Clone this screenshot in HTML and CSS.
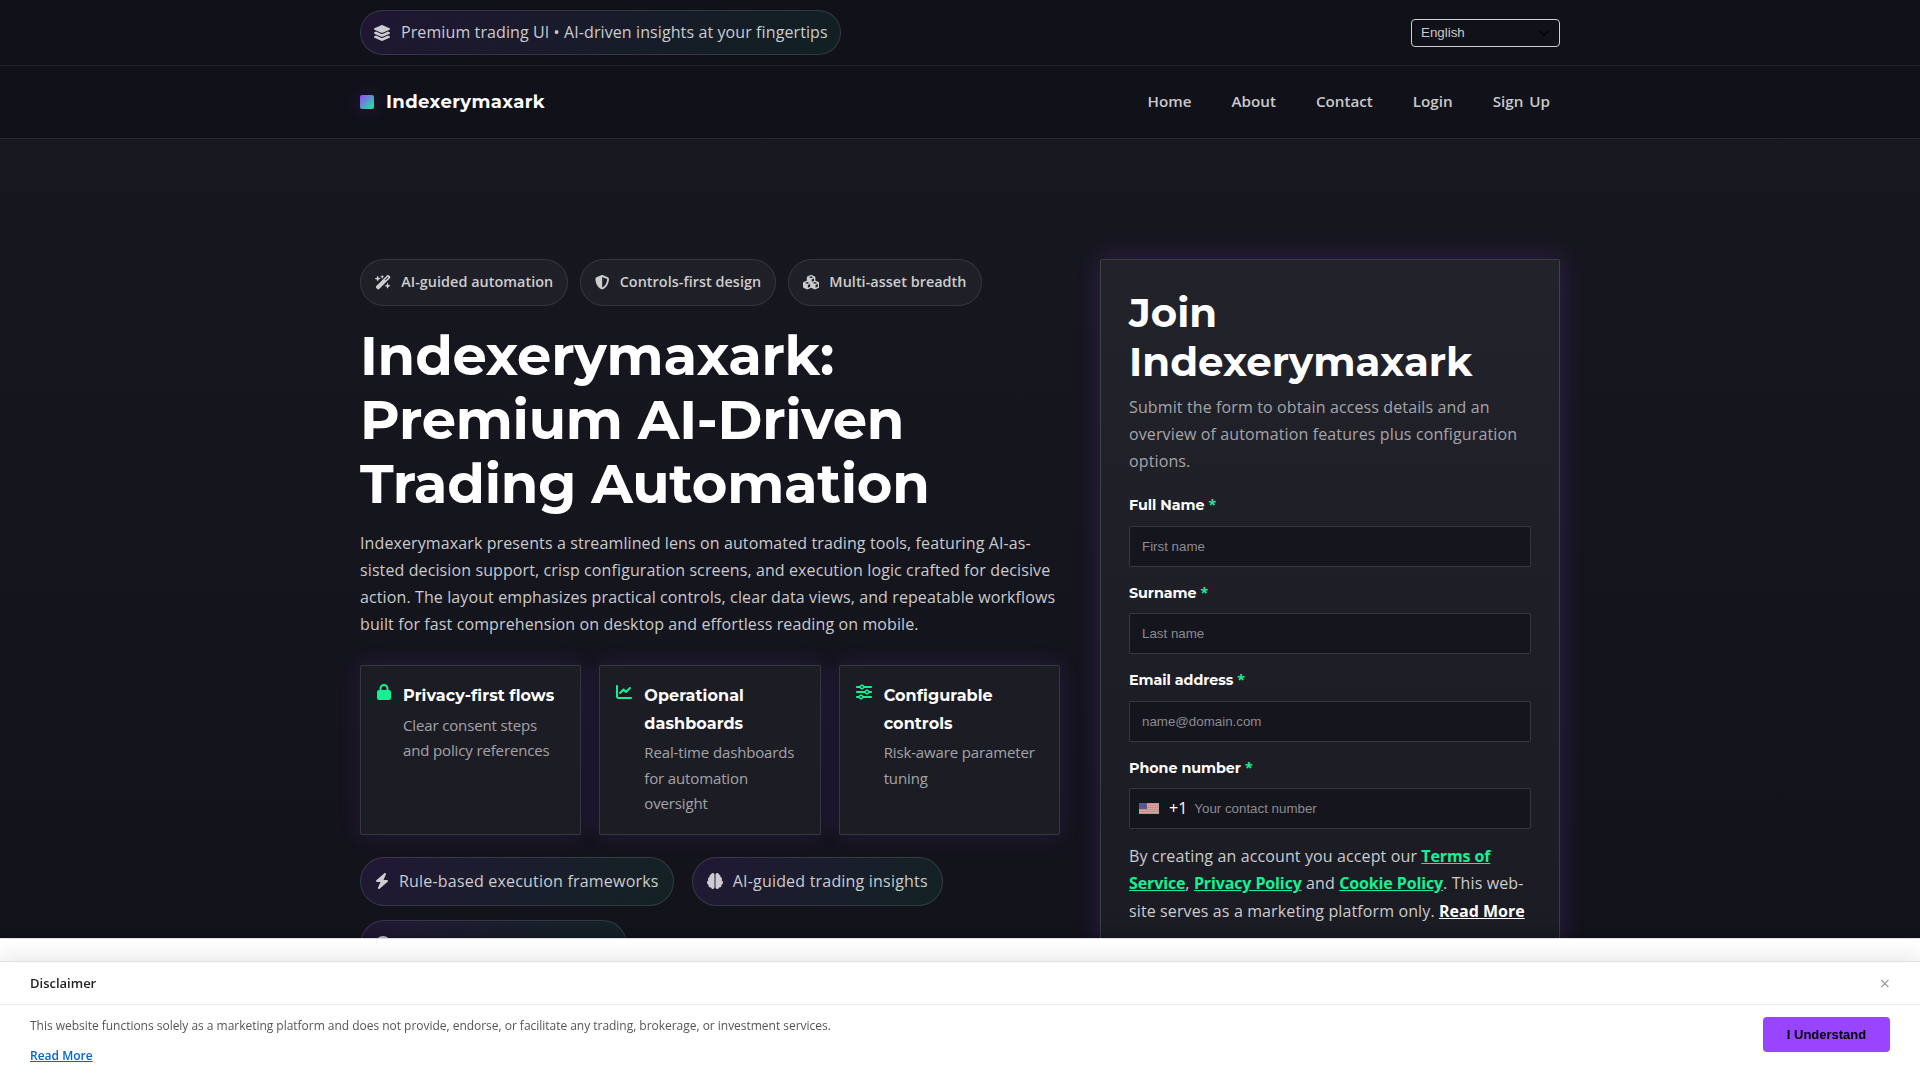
FILE: index.html
```html
<!DOCTYPE html>
<html lang="en">
<head>
    <meta charset="UTF-8">
    <meta name="viewport" content="width=device-width, initial-scale=1.0">
    <title>Indexerymaxark</title>
    <link rel="stylesheet" href="styles.css">
</head>
<body>
    <div class="topbar">
        <div class="container topbar-inner">
            <div class="pill pill-top">
                <svg class="icon icon-18" viewBox="0 0 576 512"><path d="M264.5 5.2c14.9-6.9 32.1-6.9 47 0l218.6 101c8.5 3.9 13.9 12.4 13.9 21.8s-5.4 17.9-13.9 21.8l-218.6 101c-14.9 6.9-32.1 6.9-47 0L45.9 149.8C37.4 145.8 32 137.3 32 128s5.4-17.9 13.9-21.8L264.5 5.2zM476.9 209.6l53.2 24.6c8.5 3.9 13.9 12.4 13.9 21.8s-5.4 17.9-13.9 21.8l-218.6 101c-14.9 6.9-32.1 6.9-47 0L45.9 277.8C37.4 273.8 32 265.3 32 256s5.4-17.9 13.9-21.8l53.2-24.6 152 70.2c23.4 10.8 50.4 10.8 73.8 0l152-70.2zm-152 198.2l152-70.2 53.2 24.6c8.5 3.9 13.9 12.4 13.9 21.8s-5.4 17.9-13.9 21.8l-218.6 101c-14.9 6.9-32.1 6.9-47 0L45.9 405.8C37.4 401.8 32 393.3 32 384s5.4-17.9 13.9-21.8l53.2-24.6 152 70.2c23.4 10.8 50.4 10.8 73.8 0z"/></svg>
                <span>Premium trading UI • AI-driven insights at your fingertips</span>
            </div>
            <div class="lang">
                <span>English</span>
                <svg class="lang-arrow" viewBox="0 0 10 6"><path d="M1 1l4 4 4-4"/></svg>
            </div>
        </div>
    </div>
    <header>
        <div class="container header-inner">
            <a class="brand" href="#"><span class="brand-mark"></span><span class="brand-name">Indexerymaxark</span></a>
            <nav>
                <a href="#">Home</a>
                <a href="#">About</a>
                <a href="#">Contact</a>
                <a href="#">Login</a>
                <a href="#">Sign Up</a>
            </nav>
        </div>
    </header>
    <main class="hero">
        <div class="container hero-grid">
            <div class="hero-left">
                <div class="chips">
                    <div class="chip">
                        <svg class="icon chip-icon" viewBox="0 0 576 512"><path d="M234.7 42.7L197 56.8c-3 1.1-5 4-5 7.2s2 6.1 5 7.2l37.7 14.1L248.8 123c1.1 3 4 5 7.2 5s6.1-2 7.2-5l14.1-37.7L315 71.2c3-1.1 5-4 5-7.2s-2-6.1-5-7.2L277.3 42.7 263.2 5c-1.1-3-4-5-7.2-5s-6.1 2-7.2 5L234.7 42.7zM46.1 395.4c-18.7 18.7-18.7 49.1 0 67.9l34.6 34.6c18.7 18.7 49.1 18.7 67.9 0L529.9 116.5c18.7-18.7 18.7-49.1 0-67.9L495.3 14.1c-18.7-18.7-49.1-18.7-67.9 0L46.1 395.4zM484.6 82.6l-105 105-23.3-23.3 105-105 23.3 23.3zM7.5 117.2C3 118.9 0 123.2 0 128s3 9.1 7.5 10.8L64 160l21.2 56.5c1.7 4.5 6 7.5 10.8 7.5s9.1-3 10.8-7.5L128 160l56.5-21.2c4.5-1.7 7.5-6 7.5-10.8s-3-9.1-7.5-10.8L128 96 106.8 39.5C105.1 35 100.8 32 96 32s-9.1 3-10.8 7.5L64 96 7.5 117.2zm352 256c-4.5 1.7-7.5 6-7.5 10.8s3 9.1 7.5 10.8L416 416l21.2 56.5c1.7 4.5 6 7.5 10.8 7.5s9.1-3 10.8-7.5L480 416l56.5-21.2c4.5-1.7 7.5-6 7.5-10.8s-3-9.1-7.5-10.8L480 352l-21.2-56.5c-1.7-4.5-6-7.5-10.8-7.5s-9.1 3-10.8 7.5L416 352l-56.5 21.2z"/></svg>
                        <span>AI-guided automation</span>
                    </div>
                    <div class="chip">
                        <svg class="icon chip-icon" viewBox="0 0 512 512"><path d="M256 0c4.6 0 9.2 1 13.4 2.9L457.7 82.8c22 9.3 38.4 31 38.3 57.2c-.5 99.2-41.3 280.7-213.6 363.2c-16.7 8-36.1 8-52.8 0C57.3 420.7 16.5 239.2 16 140c-.1-26.2 16.3-47.9 38.3-57.2L242.7 2.9C246.8 1 251.4 0 256 0zm0 66.8V444.8C394 378 431.1 230.1 432 141.4L256 66.8z"/></svg>
                        <span>Controls-first design</span>
                    </div>
                    <div class="chip">
                        <svg class="icon chip-icon" viewBox="0 0 576 512"><path d="M290.8 48.6l78.4 29.7L288 109.5 206.8 78.3l78.4-29.7c1.8-.7 3.8-.7 5.7 0zM136 92.5V204.7c-1.3 .4-2.6 .8-3.9 1.3l-96 36.4C14.4 250.6 0 271.5 0 294.7V413.9c0 22.2 13.1 42.3 33.5 51.3l96 42.2c14.4 6.3 30.7 6.3 45.1 0L288 457.5l113.5 49.9c14.4 6.3 30.7 6.3 45.1 0l96-42.2c20.3-8.9 33.5-29.1 33.5-51.3V294.7c0-23.3-14.4-44.1-36.1-52.4l-96-36.4c-1.3-.5-2.6-.9-3.9-1.3V92.5c0-23.3-14.4-44.1-36.1-52.4l-96-36.4c-12.8-4.8-26.9-4.8-39.7 0l-96 36.4C150.4 48.4 136 69.3 136 92.5zM392 210.6l-82.4 31.2V152.6L392 121v89.6zM154.8 250.9l78.4 29.7L152 311.7 70.8 280.6l78.4-29.7c1.8-.7 3.8-.7 5.7 0zm18.8 204.4V354.8L256 323.2v95.9l-82.4 36.2zM421.2 250.9c1.8-.7 3.8-.7 5.7 0l78.4 29.7L424 311.7l-81.2-31.1 78.4-29.7zM523.2 421.2l-77.6 34.1V354.8L528 323.2v90.7c0 3.2-1.9 6-4.8 7.3z"/></svg>
                        <span>Multi-asset breadth</span>
                    </div>
                </div>
                <h1>Indexerymaxark: Premium AI-Driven Trading Automation</h1>
                <p class="lead">Indexerymaxark presents a streamlined lens on automated trading tools, featuring AI-as&shy;sisted decision support, crisp configuration screens, and execution logic crafted for decisive action. The layout emphasizes practical controls, clear data views, and repeatable workflows built for fast comprehension on desktop and effortless reading on mobile.</p>
                <div class="cards">
                    <div class="card">
                        <svg class="icon icon-14" viewBox="0 0 448 512"><path d="M144 144v48H304V144c0-44.2-35.8-80-80-80s-80 35.8-80 80zM80 192V144C80 64.5 144.5 0 224 0s144 64.5 144 144v48h16c35.3 0 64 28.7 64 64V448c0 35.3-28.7 64-64 64H64c-35.3 0-64-28.7-64-64V256c0-35.3 28.7-64 64-64H80z"/></svg>
                        <div>
                            <div class="card-title">Privacy-first flows</div>
                            <div class="card-text">Clear consent steps and policy references</div>
                        </div>
                    </div>
                    <div class="card">
                        <svg class="icon icon-16" viewBox="0 0 512 512"><path d="M64 64c0-17.7-14.3-32-32-32S0 46.3 0 64V400c0 44.2 35.8 80 80 80H480c17.7 0 32-14.3 32-32s-14.3-32-32-32H80c-8.8 0-16-7.2-16-16V64zm406.6 86.6c12.5-12.5 12.5-32.8 0-45.3s-32.8-12.5-45.3 0L320 210.7l-57.4-57.4c-12.5-12.5-32.8-12.5-45.3 0l-112 112c-12.5 12.5-12.5 32.8 0 45.3s32.8 12.5 45.3 0L240 221.3l57.4 57.4c12.5 12.5 32.8 12.5 45.3 0l128-128z"/></svg>
                        <div>
                            <div class="card-title">Operational dashboards</div>
                            <div class="card-text">Real-time dashboards for automation oversight</div>
                        </div>
                    </div>
                    <div class="card">
                        <svg class="icon icon-16" viewBox="0 0 512 512"><path d="M0 416c0 17.7 14.3 32 32 32l54.7 0c12.3 28.3 40.5 48 73.3 48s61-19.7 73.3-48L480 448c17.7 0 32-14.3 32-32s-14.3-32-32-32l-246.7 0c-12.3-28.3-40.5-48-73.3-48s-61 19.7-73.3 48L32 384c-17.7 0-32 14.3-32 32zm128 0a32 32 0 1 1 64 0 32 32 0 1 1 -64 0zM320 256a32 32 0 1 1 64 0 32 32 0 1 1 -64 0zm32-80c-32.8 0-61 19.7-73.3 48L32 224c-17.7 0-32 14.3-32 32s14.3 32 32 32l246.7 0c12.3 28.3 40.5 48 73.3 48s61-19.7 73.3-48l54.7 0c17.7 0 32-14.3 32-32s-14.3-32-32-32l-54.7 0c-12.3-28.3-40.5-48-73.3-48zM192 128a32 32 0 1 1 0-64 32 32 0 1 1 0 64zm73.3-64C253 35.7 224.8 16 192 16s-61 19.7-73.3 48L32 64C14.3 64 0 78.3 0 96s14.3 32 32 32l86.7 0c12.3 28.3 40.5 48 73.3 48s61-19.7 73.3-48L480 128c17.7 0 32-14.3 32-32s-14.3-32-32-32L265.3 64z"/></svg>
                        <div>
                            <div class="card-title">Configurable controls</div>
                            <div class="card-text">Risk-aware parameter tuning</div>
                        </div>
                    </div>
                </div>
                <div class="pills">
                    <div class="pill">
                        <svg class="icon icon-14" viewBox="0 0 448 512"><path d="M349.4 44.6c5.9-13.7 1.5-29.7-10.6-38.5s-28.6-8-39.9 1.8l-256 224c-10 8.8-13.6 22.9-8.9 35.3S50.7 288 64 288H175.5L98.6 467.4c-5.9 13.7-1.5 29.7 10.6 38.5s28.6 8 39.9-1.8l256-224c10-8.8 13.6-22.9 8.9-35.3s-16.6-20.7-30-20.7H272.5L349.4 44.6z"/></svg>
                        <span>Rule-based execution frameworks</span>
                    </div>
                    <div class="pill">
                        <svg class="icon icon-16" viewBox="0 0 512 512"><path d="M184 0c30.9 0 56 25.1 56 56V456c0 30.9-25.1 56-56 56c-28.9 0-52.7-21.9-55.7-50.1c-5.2 1.4-10.7 2.1-16.3 2.1c-35.3 0-64-28.7-64-64c0-7.4 1.3-14.6 3.6-21.2C21.4 367.4 0 338.2 0 304c0-31.9 18.7-59.5 45.8-72.3C37.1 220.8 32 207 32 192c0-30.7 21.6-56.3 50.4-62.6C80.8 123.9 80 118 80 112c0-29.9 20.6-55.1 48.3-62.1C131.3 21.9 155.1 0 184 0zM328 0c28.9 0 52.6 21.9 55.7 49.9c27.8 7 48.3 32.1 48.3 62.1c0 6-.8 11.9-2.4 17.4c28.8 6.2 50.4 31.9 50.4 62.6c0 15-5.1 28.8-13.8 39.7C493.3 244.5 512 272.1 512 304c0 34.2-21.4 63.4-51.6 74.8c2.3 6.6 3.6 13.8 3.6 21.2c0 35.3-28.7 64-64 64c-5.6 0-11.1-.7-16.3-2.1c-3 28.2-26.8 50.1-55.7 50.1c-30.9 0-56-25.1-56-56V56c0-30.9 25.1-56 56-56z"/></svg>
                        <span>AI-guided trading insights</span>
                    </div>
                    <div class="pill">
                        <svg class="icon icon-16" viewBox="0 0 512 512"><circle cx="256" cy="256" r="256"/></svg>
                        <span>Automation visibility panels</span>
                    </div>
                </div>
            </div>
            <form class="form">
                <h2>Join Indexerymaxark</h2>
                <p class="form-sub">Submit the form to obtain access details and an overview of automation features plus configuration options.</p>
                <label for="fname">Full Name <span>*</span></label>
                <input id="fname" type="text" placeholder="First name">
                <label for="lname">Surname <span>*</span></label>
                <input id="lname" type="text" placeholder="Last name">
                <label for="email">Email address <span>*</span></label>
                <input id="email" type="email" placeholder="name@domain.com">
                <label for="phone">Phone number <span>*</span></label>
                <div class="phone">
                    <svg class="flag" viewBox="0 0 20 11"><rect width="20" height="11" fill="#d98289"/><path d="M0 1.5h20M0 3.5h20M0 5.5h20M0 7.5h20M0 9.5h20" stroke="#dcaeb4" stroke-width=".7"/><rect width="8" height="6" fill="#58588a"/></svg>
                    <span class="code">+1</span>
                    <input id="phone" type="tel" placeholder="Your contact number">
                </div>
                <p class="terms">By creating an account you accept our <a href="#">Terms of Service</a>, <a href="#">Privacy Policy</a> and <a href="#">Cookie Policy</a>. This web&shy;site serves as a marketing platform only. <a class="more" href="#">Read More</a></p>
            </form>
        </div>
    </main>
    <div class="notice-back"></div>
    <div class="notice">
        <div class="notice-head">
            <span>Disclaimer</span>
            <span class="close">×</span>
        </div>
        <div class="notice-body">
            <div>
                <p>This website functions solely as a marketing platform and does not provide, endorse, or facilitate any trading, brokerage, or investment services.</p>
                <a href="#">Read More</a>
            </div>
            <button type="button">I Understand</button>
        </div>
    </div>
</body>
</html>
```
FILE: styles.css
```css
* {
    box-sizing: border-box;
}
body {
    margin: 0;
    height: 1080px;
    overflow: hidden;
    font-family: "Open Sans", "Noto Sans", sans-serif;
    font-size: 16px;
    line-height: 1.7;
    color: rgba(255, 255, 255, 0.78);
    background: linear-gradient(180deg, #181821 0%, #12121b 100%);
}
h1, h2, p {
    margin: 0;
}
.container {
    width: 1200px;
    margin: 0 auto;
}
.icon {
    display: block;
    flex: none;
    height: 16px;
    fill: currentColor;
}
.icon-14 {
    width: 14px;
}
.icon-16 {
    width: 16px;
}
.icon-18 {
    width: 18px;
}

/* top bar */
.topbar {
    background: #11111a;
    border-bottom: 1px solid #22222b;
    padding: 10px 0;
}
.topbar-inner, .header-inner {
    display: flex;
    align-items: center;
    justify-content: space-between;
}
.pill {
    display: flex;
    align-items: center;
    gap: 10px;
    padding: 10px 14px;
    border: 1px solid rgba(255, 255, 255, 0.12);
    border-radius: 999px;
    font-weight: 500;
    letter-spacing: 0.2px;
    background: linear-gradient(135deg, rgba(153, 69, 255, 0.11), rgba(20, 241, 149, 0.07));
}
.pill-top {
    padding: 8px 12px;
    font-weight: 400;
    letter-spacing: 0.1px;
}
.lang {
    display: flex;
    align-items: center;
    justify-content: space-between;
    width: 149px;
    height: 28px;
    padding: 0 10px 0 9px;
    border: 1px solid #cfcfd1;
    border-radius: 4px;
    font: 13.33px "Liberation Sans", Arial, sans-serif;
}
.lang-arrow {
    width: 10px;
    height: 6px;
    fill: none;
    stroke: #000;
    stroke-width: 1.6;
}

/* header */
header {
    height: 73px;
    background: #11111a;
    border-bottom: 1px solid #27272f;
}
.header-inner {
    height: 72px;
}
.brand {
    display: flex;
    align-items: center;
    gap: 12px;
    color: #fff;
    text-decoration: none;
}
.brand-mark {
    width: 14px;
    height: 14px;
    border-radius: 2px;
    background: linear-gradient(135deg, #9945ff, #14f195);
    box-shadow: 0 0 18px rgba(153, 69, 255, 0.2);
}
.brand-name, h1, h2, label, .card-title {
    font-family: Montserrat, Inter, sans-serif;
    font-weight: 700;
    color: #fff;
}
.brand-name {
    font-size: 18px;
    letter-spacing: 0.4px;
}
nav {
    display: flex;
    gap: 20px;
}
nav a {
    padding: 0 10px;
    color: rgba(255, 255, 255, 0.78);
    font-size: 15.2px;
    font-weight: 600;
    word-spacing: 2px;
    text-decoration: none;
}

/* hero */
.hero {
    padding-top: 120px;
}
.hero-grid {
    display: grid;
    grid-template-columns: 700px 460px;
    gap: 40px;
    align-items: start;
}
.chips {
    display: flex;
    gap: 12px;
}
.chip {
    display: flex;
    align-items: center;
    gap: 10px;
    padding: 10px 14px;
    border: 1px solid rgba(255, 255, 255, 0.1);
    border-radius: 999px;
    background: rgba(255, 255, 255, 0.04);
    font-size: 14.4px;
    font-weight: 600;
    letter-spacing: 0.04px;
}
.chip-icon {
    height: 14.4px;
    width: auto;
}
h1 {
    margin-top: 18px;
    font-size: 54.4px;
    line-height: 64px;
    letter-spacing: -0.25px;
}
.lead {
    margin-top: 14px;
    letter-spacing: 0.11px;
}
.cards {
    display: grid;
    grid-template-columns: repeat(3, 1fr);
    gap: 18px;
    margin-top: 27px;
}
.card {
    display: flex;
    align-items: flex-start;
    gap: 12px;
    min-height: 170px;
    padding: 16px;
    border: 1px solid rgba(255, 255, 255, 0.12);
    border-radius: 2px;
    background: #1c1c25;
    box-shadow: 0 0 22px rgba(153, 69, 255, 0.15);
}
.card .icon {
    margin-top: 2px;
    color: #14f195;
}
.card-title {
    letter-spacing: 0.08px;
}
.card-text {
    margin-top: 3px;
    font-size: 15px;
    line-height: 25.84px;
    letter-spacing: -0.14px;
    color: rgba(255, 255, 255, 0.6);
}
.pills {
    display: flex;
    flex-wrap: wrap;
    gap: 13.5px 18px;
    margin-top: 21.4px;
}

/* sign up form */
.form {
    height: 800px;
    padding: 28px;
    border: 1px solid rgba(255, 255, 255, 0.14);
    border-radius: 2px;
    background: linear-gradient(180deg, #22222b, #1a1a23);
    box-shadow: 0 0 24px rgba(153, 69, 255, 0.2);
}
h2 {
    font-size: 40.3px;
    line-height: 49px;
}
.form-sub {
    margin: 7.6px 0 17.4px;
    letter-spacing: 0.12px;
    color: rgba(255, 255, 255, 0.6);
}
label {
    display: block;
    margin-bottom: 8px;
    padding-top: 0.5px;
    font-size: 14.3px;
    line-height: 24.5px;
    letter-spacing: -0.05px;
}
label span {
    color: #14f195;
    font-family: "Open Sans", sans-serif;
    line-height: 1;
}
input {
    display: block;
    width: 100%;
    height: 41px;
    margin: 0 0 13.5px;
    padding: 0 12px;
    border: 1px solid rgba(255, 255, 255, 0.14);
    border-radius: 2px;
    outline: 0;
    background: #15151e;
    font: 13.33px "Liberation Sans", Arial, sans-serif;
    color: #fff;
}
input::placeholder {
    color: #8b8b90;
}
.phone {
    display: flex;
    align-items: center;
    height: 41px;
    padding-left: 9px;
    border: 1px solid rgba(255, 255, 255, 0.14);
    border-radius: 2px;
    background: #15151e;
}
.phone input {
    height: 39px;
    margin: 0;
    padding: 0 7px;
    border: 0;
    background: none;
}
.flag {
    flex: none;
    width: 20px;
    height: 11px;
    margin-right: 10px;
}
.code {
    color: #fff;
}
.terms {
    margin-top: 13.9px;
    letter-spacing: 0.12px;
}
.terms a {
    color: #14f195;
    font-weight: 700;
    letter-spacing: -0.12px;
}
.terms .more {
    color: #fff;
    letter-spacing: 0;
}

/* disclaimer */
.notice-back {
    position: fixed;
    left: 0;
    right: 0;
    bottom: 0;
    height: 142px;
    border-top: 1px solid #e0e0e0;
    background: #fff;
    box-shadow: 0 -2px 10px rgba(0, 0, 0, 0.3);
}
.notice {
    position: fixed;
    left: 0;
    right: 0;
    bottom: 0;
    height: 119px;
    border-top: 1px solid #e0e0e0;
    background: #fff;
    box-shadow: 0 -4px 20px rgba(0, 0, 0, 0.1);
}
.notice-head {
    display: flex;
    align-items: center;
    justify-content: space-between;
    height: 43px;
    padding: 0 30px;
    border-bottom: 1px solid #eee;
    font-size: 13px;
    font-weight: 600;
    color: #222;
}
.close {
    font-size: 18px;
    font-weight: 400;
    color: #999;
}
.notice-body {
    display: flex;
    align-items: flex-start;
    justify-content: space-between;
    padding: 12px 30px;
    font-size: 12px;
    line-height: 18px;
    color: #555;
}
.notice-body p {
    margin-bottom: 12px;
    letter-spacing: -0.025px;
}
.notice-body a {
    display: block;
    color: #0066cc;
    font-weight: 600;
}
.notice-body button {
    width: 127px;
    height: 35px;
    border: 0;
    border-radius: 4px;
    background: #9945ff;
    font: bold 13px "Liberation Sans", Arial, sans-serif;
    color: #000;
}
```
